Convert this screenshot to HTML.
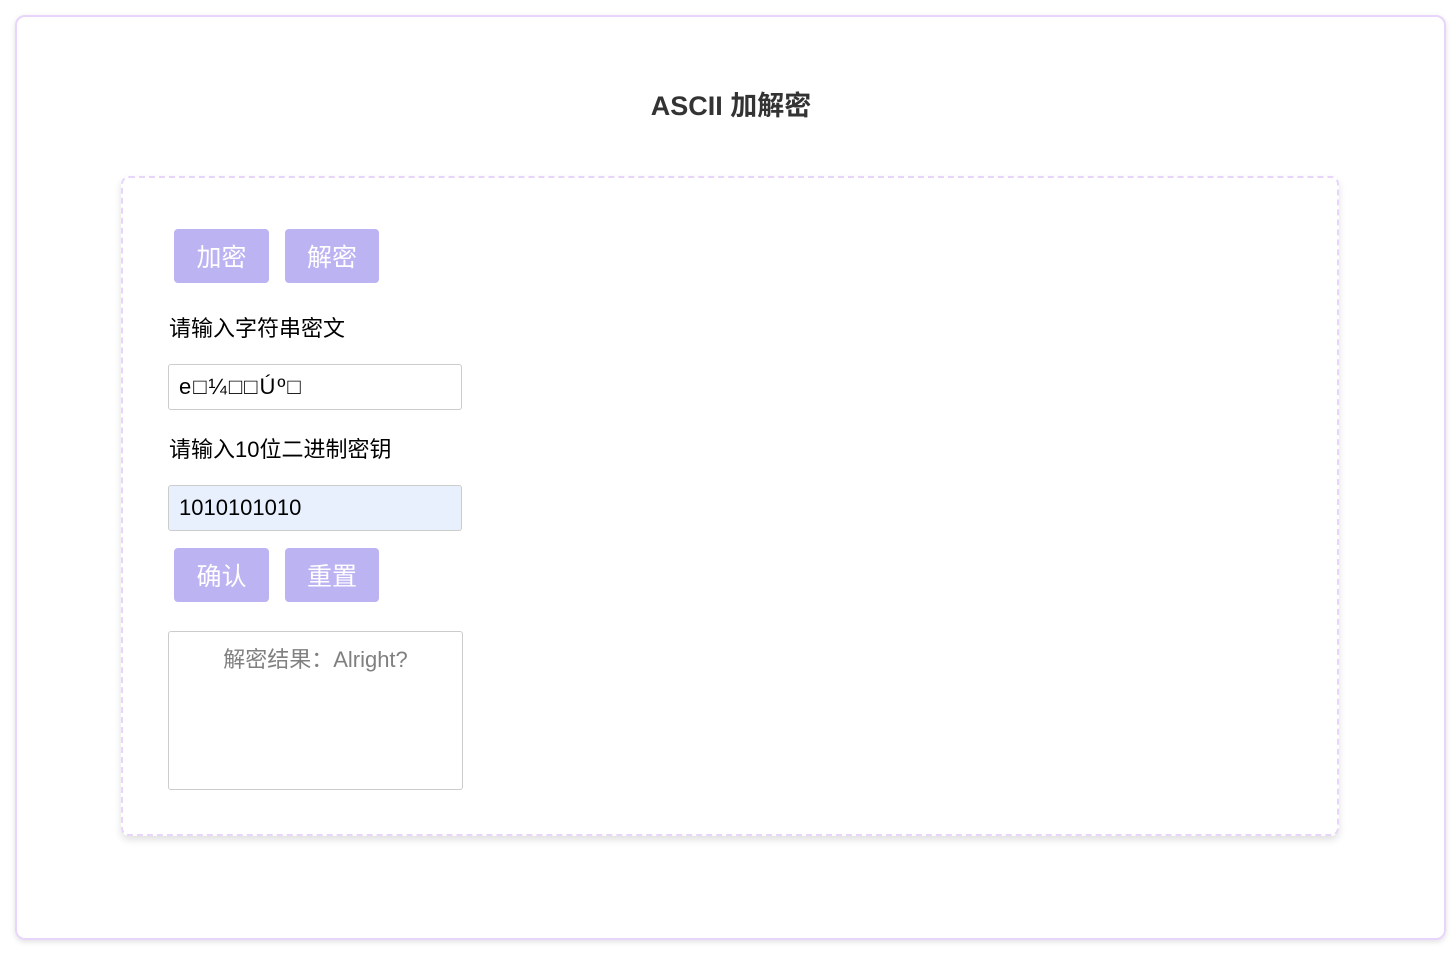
<!DOCTYPE html>
<html><head><meta charset="utf-8"><style>
*{box-sizing:border-box;margin:0;padding:0}
body{width:1456px;height:954px;background:#fff;font-family:"Liberation Sans","Noto Sans CJK SC",sans-serif;position:relative;overflow:hidden}
.outer{position:absolute;left:15px;top:15px;width:1431px;height:925px;border:2px solid #e8d5fb;border-radius:10px;box-shadow:0 2px 6px rgba(0,0,0,0.12)}
h1{position:absolute;left:0;width:1462px;top:84px;text-align:center;font-size:27px;font-weight:bold;color:#333}
.inner{position:absolute;left:121px;top:176px;width:1218px;height:660px;border:2px dashed #e8d5fb;border-radius:8px;box-shadow:0 4px 8px rgba(0,0,0,0.12)}
.btn{position:absolute;width:95px;height:54px;background:#bcb3f2;border-radius:4px;color:#fff;font-size:25px;text-align:center;line-height:58px}
.lbl{position:absolute;left:169px;font-size:22px;color:#000}
.inp{position:absolute;left:168px;width:294px;height:46px;border:1px solid #ccc;border-radius:3px;font-size:22px;padding-left:10px;line-height:44px;color:#000}
.res{position:absolute;left:168px;top:631px;width:295px;height:159px;border:1px solid #ccc;border-radius:3px;text-align:center;font-size:22px;color:#808080;padding-top:10px}
</style></head><body>
<div class="outer"></div>
<h1>ASCII 加解密</h1>
<div class="inner"></div>
<div class="btn" style="left:174px;top:229px">加密</div>
<div class="btn" style="left:285px;top:229px;width:94px">解密</div>
<div class="lbl" style="top:311px">请输入字符串密文</div>
<div class="inp" style="top:364px;letter-spacing:2px">e□¼□□Úº□</div>
<div class="lbl" style="top:432px">请输入10位二进制密钥</div>
<div class="inp" style="top:485px;background:#e8f0fe">1010101010</div>
<div class="btn" style="left:174px;top:548px">确认</div>
<div class="btn" style="left:285px;top:548px;width:94px">重置</div>
<div class="res">解密结果：Alright?</div>
</body></html>
